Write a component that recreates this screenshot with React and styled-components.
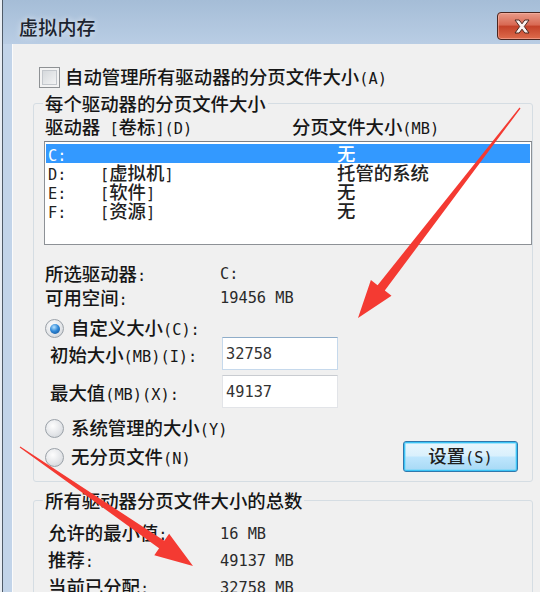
import React from "react";
import styled, { createGlobalStyle } from "styled-components";

const CJK = `"Noto Sans CJK SC", "Noto Sans CJK JP", sans-serif`;
const MONO = `"DejaVu Sans Mono", "Liberation Mono", monospace`;

const GlobalStyle = createGlobalStyle`
  * {
    margin: 0;
    padding: 0;
    box-sizing: border-box;
  }
  html, body {
    width: 540px;
    height: 592px;
    overflow: hidden;
    background: #e9eef4;
  }
  body {
    font-family: ${CJK};
    color: #161616;
  }
`;

// half-width latin runs, like the SimSun ascii glyphs in the dialog
const Ascii = styled.span`
  font-family: ${MONO};
  font-size: 15.3px;
  white-space: pre;
`;

const mixed = (text) =>
  text
    .split(/([\x20-\x7e]+)/)
    .filter(Boolean)
    .map((part, i) =>
      /^[\x20-\x7e]+$/.test(part) ? <Ascii key={i}>{part}</Ascii> : part
    );

const Screen = styled.div`
  position: relative;
  width: 540px;
  height: 592px;
  padding-left: 2px;
  overflow: hidden;
`;

const Window = styled.div`
  height: 100%;
  display: flex;
  flex-direction: column;
  border-left: 1px solid #4f5b68;
  background: #c2d4e9;
`;

const TitleBar = styled.div`
  height: 44px;
  flex-shrink: 0;
  display: flex;
  align-items: center;
  padding: 8px 0 0 16px;
  background: linear-gradient(180deg, #a5bdd7 0%, #b9cde4 100%);
`;

const Title = styled.h1`
  font-size: 19px;
  font-weight: 500;
  color: #1c2430;
  letter-spacing: 0.2px;
  text-shadow: 0 0 6px rgba(255, 255, 255, 0.7);
`;

const CloseButton = styled.span`
  display: flex;
  align-items: center;
  justify-content: center;
  flex: 0 0 50px;
  height: 28px;
  margin-left: auto;
  margin-right: -7px;
  border: 1px solid #4a2620;
  border-radius: 4px;
  background-color: #cc4a30;
  background-image: linear-gradient(rgba(255, 220, 210, 0.55), rgba(255, 200, 190, 0.25) 45%, rgba(150, 20, 0, 0.15) 52%, rgba(255, 170, 130, 0.35));
  box-shadow: inset 0 0 0 1px rgba(255, 190, 175, 0.5);
`;

const Body = styled.div`
  flex: 1;
  display: flex;
  min-height: 0;
`;

const Frame = styled.div`
  width: 9px;
  flex-shrink: 0;
  background: #c2d4e9;
`;

const Content = styled.div`
  flex: 1;
  background: #f0f0f0;
  border-left: 1px solid #fbfbfb;
  padding: 21px 0 0 20px;
  display: flex;
  flex-direction: column;
  align-items: flex-start;
  font-size: 18.4px;
  font-weight: 500;
  line-height: 24px;
`;

const CheckRow = styled.label`
  height: 24px;
  display: flex;
  align-items: center;
  gap: 5px;
  margin-left: 6px;
`;

const CheckBox = styled.span`
  width: 21px;
  height: 21px;
  border: 1px solid #8e9194;
  background: linear-gradient(135deg, #cfd3d7, #f9f9f9);
  box-shadow: inset 0 0 0 2px #f3f3f3, inset 0 0 0 3px #c3c7cc;
`;

const Group = styled.fieldset`
  width: 500px;
  min-width: 0;
  margin-top: ${(p) => p.$top}px;
  padding: 0 0 ${(p) => p.$bottom}px 9px;
  border: 1px solid #d5dde3;
  border-radius: 3px;
`;

const Caption = styled.legend`
  padding: 0 2px;
  line-height: 24px;
`;

const HeaderRow = styled.div`
  height: 22px;
  line-height: 22px;
  display: grid;
  grid-template-columns: 247px 1fr;
  padding-left: 2px;
`;

const ListBox = styled.div`
  width: 488px;
  height: 104px;
  margin: 4px 0 0 1px;
  padding: 2px 1px;
  background: #fff;
  border: 1px solid #8d9196;
  border-top-color: #7b7f85;
`;

const ListRow = styled.div`
  height: 19px;
  line-height: 19px;
  display: grid;
  grid-template-columns: 52px 237px 1fr;
  padding-left: 2px;
  color: ${(p) => (p.$selected ? "#fff" : "#222")};
  background: ${(p) => (p.$selected ? "#3399ff" : "transparent")};
`;

const InfoGrid = styled.div`
  display: grid;
  grid-template-columns: ${(p) => p.$col}px 1fr;
  grid-auto-rows: ${(p) => p.$row}px;
  align-items: center;
  margin-top: ${(p) => p.$top}px;
  padding-left: ${(p) => p.$left}px;
`;

const Value = styled.span`
  font-family: ${MONO};
  font-size: 15.3px;
  color: #2a2a2a;
  white-space: pre;
`;

const RadioRow = styled.label`
  height: ${(p) => p.$h}px;
  display: flex;
  align-items: center;
  gap: 7px;
  padding-left: 2px;
  margin-top: ${(p) => p.$top || 0}px;
`;

const Radio = styled.span`
  width: 19px;
  height: 19px;
  flex-shrink: 0;
  border-radius: 50%;
  border: 1px solid #9aa1a8;
  background: radial-gradient(circle at 40% 35%, #fdfdfd 0%, #e4e6e9 55%, #c9cdd2 100%);
  display: flex;
  align-items: center;
  justify-content: center;

  &::after {
    content: "";
    display: ${(p) => (p.$checked ? "block" : "none")};
    width: 10px;
    height: 10px;
    border-radius: 50%;
    background: radial-gradient(circle at 40% 32%, #b5e2ff 0%, #2f88d8 45%, #0e4a8c 100%);
  }
`;

const SizeRow = styled.div`
  height: 29px;
  display: grid;
  grid-template-columns: 172px 116px;
  align-items: center;
  padding-left: 7px;
  margin-top: ${(p) => p.$top}px;
`;

const SizeLabel = styled.span`
  padding-top: 3px;
`;

const SizeInput = styled.input`
  width: 116px;
  height: 33px;
  padding: 0 3px;
  font-family: ${MONO};
  font-size: 15.3px;
  color: #333;
  background: #fff;
  outline: none;
  border: 1px solid ${(p) => (p.$focused ? "#c6d9ec" : "#e2e4e8")};
  border-top-color: ${(p) => (p.$focused ? "#8fadc9" : "#c9ccd1")};
`;

const BottomRow = styled.div`
  width: 100%;
  display: flex;
  justify-content: space-between;
  align-items: flex-end;
  margin-top: 10px;
`;

const RadioColumn = styled.div`
  display: flex;
  flex-direction: column;
`;

const SetButton = styled.button`
  width: 115px;
  height: 31px;
  margin-right: 14px;
  font-family: ${CJK};
  font-size: 18.4px;
  font-weight: 500;
  line-height: 24px;
  color: #1e1e1e;
  border: 1px solid #2f78ad;
  border-radius: 3px;
  background: linear-gradient(180deg, #eaf6fd 0%, #d9f0fc 48%, #bee6fd 52%, #a7d9f5 100%);
  box-shadow: inset 0 0 0 1px #3cc4f5, inset 0 0 0 2px rgba(120, 215, 250, 0.6);
`;

const Overlay = styled.svg`
  position: absolute;
  left: 0;
  top: 0;
  pointer-events: none;
`;

const drives = [
  { drive: "C:", label: "", size: "无", selected: true },
  { drive: "D:", label: "[虚拟机]", size: "托管的系统" },
  { drive: "E:", label: "[软件]", size: "无" },
  { drive: "F:", label: "[资源]", size: "无" },
];

const totals = [
  ["允许的最小值:", "16 MB"],
  ["推荐:", "49137 MB"],
  ["当前已分配:", "32758 MB"],
];

export default function App() {
  return (
    <>
      <GlobalStyle />
      <Screen>
        <Window>
          <TitleBar>
            <Title>虚拟内存</Title>
            <CloseButton>
              <svg width="18" height="15" viewBox="0 0 18 15">
                <path
                  d="M2 1 H6.2 L9 4.8 L11.8 1 H16 L11.3 7.5 L16 14 H11.8 L9 10.2 L6.2 14 H2 L6.7 7.5 Z"
                  fill="#fbf3f1"
                  stroke="#4b2a23"
                  strokeWidth="1"
                />
              </svg>
            </CloseButton>
          </TitleBar>
          <Body>
            <Frame />
            <Content>
              <CheckRow>
                <CheckBox />
                <span>{mixed("自动管理所有驱动器的分页文件大小(A)")}</span>
              </CheckRow>

              <Group $top={2} $bottom={9}>
                <Caption>每个驱动器的分页文件大小</Caption>
                <HeaderRow>
                  <span>{mixed("驱动器 [卷标](D)")}</span>
                  <span>{mixed("分页文件大小(MB)")}</span>
                </HeaderRow>
                <ListBox>
                  {drives.map((d) => (
                    <ListRow key={d.drive} $selected={d.selected}>
                      <span>{mixed(d.drive)}</span>
                      <span>{mixed(d.label)}</span>
                      <span>{d.size}</span>
                    </ListRow>
                  ))}
                </ListBox>

                <InfoGrid $col={175} $row={24} $top={17} $left={2}>
                  <span>{mixed("所选驱动器:")}</span>
                  <Value>C:</Value>
                  <span>{mixed("可用空间:")}</span>
                  <Value>19456 MB</Value>
                </InfoGrid>

                <RadioRow $h={17} $top={10}>
                  <Radio $checked />
                  <span>{mixed("自定义大小(C):")}</span>
                </RadioRow>
                <SizeRow $top={0}>
                  <SizeLabel>{mixed("初始大小(MB)(I):")}</SizeLabel>
                  <SizeInput $focused readOnly defaultValue="32758" />
                </SizeRow>
                <SizeRow $top={9}>
                  <SizeLabel>{mixed("最大值(MB)(X):")}</SizeLabel>
                  <SizeInput readOnly defaultValue="49137" />
                </SizeRow>

                <BottomRow>
                  <RadioColumn>
                    <RadioRow $h={29}>
                      <Radio />
                      <span>{mixed("系统管理的大小(Y)")}</span>
                    </RadioRow>
                    <RadioRow $h={29}>
                      <Radio />
                      <span>{mixed("无分页文件(N)")}</span>
                    </RadioRow>
                  </RadioColumn>
                  <SetButton>{mixed("设置(S)")}</SetButton>
                </BottomRow>
              </Group>

              <Group $top={6} $bottom={20}>
                <Caption>所有驱动器分页文件大小的总数</Caption>
                <InfoGrid $col={172} $row={27} $top={8} $left={5}>
                  {totals.map(([k, v]) => (
                    <React.Fragment key={k}>
                      <span>{mixed(k)}</span>
                      <Value>{v}</Value>
                    </React.Fragment>
                  ))}
                </InfoGrid>
              </Group>
            </Content>
          </Body>
        </Window>

        <Overlay width="540" height="592" viewBox="0 0 540 592">
          <polygon
            points="520.5,108.4 384.8,290.6 391.5,295.8 358,318 370.9,280 377.6,285.2 519.5,107.6"
            fill="#f43a32"
          />
          <polygon
            points="19.7,447.5 159.1,548.2 154.3,555.2 193,566 169.1,533.8 164.3,540.8 20.3,446.5"
            fill="#f43a32"
          />
        </Overlay>
      </Screen>
    </>
  );
}
